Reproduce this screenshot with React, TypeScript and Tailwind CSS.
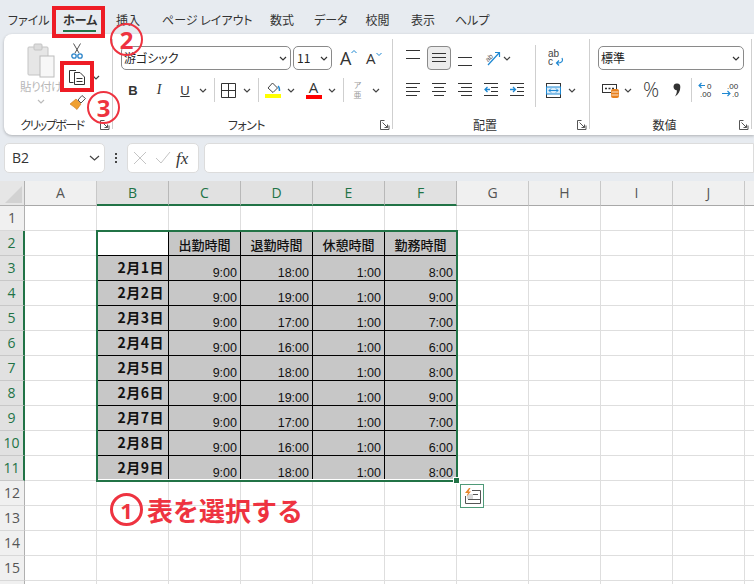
import React from "react";

const jp = { fontFamily: '"Noto Sans CJK JP", "Noto Sans", sans-serif' };

function Svg({ w, h, children }: { w: number; h: number; children: React.ReactNode }) {
  return (
    <svg width={w} height={h} viewBox={`0 0 ${w} ${h}`} fill="none" className="block shrink-0">
      {children}
    </svg>
  );
}

function Chev({ color = "#444" }: { color?: string }) {
  return (
    <div className="w-[10px] flex justify-center shrink-0">
      <Svg w={8} h={5}>
        <path d="M1 1l3 3 3-3" stroke={color} strokeWidth="1.2" />
      </Svg>
    </div>
  );
}

function Launcher() {
  return (
    <div className="w-[10px] mr-[2px] shrink-0">
      <Svg w={10} h={10}>
        <path d="M9 5.5V9.5H0.5V0.5H4.5" stroke="#555" strokeWidth="1" />
        <path d="M2.5 2.5L7.5 7.5M7.5 4.5V7.5H4.5" stroke="#555" strokeWidth="1" />
      </Svg>
    </div>
  );
}

function Lines({ rows }: { rows: number[][] }) {
  return (
    <Svg w={14} h={14}>
      {rows.map(([x1, x2, y], i) => (
        <path key={i} d={`M${x1} ${y}.5H${x2}`} stroke="#333" strokeWidth="1" />
      ))}
    </Svg>
  );
}

function Indent({ inc }: { inc?: boolean }) {
  return (
    <Svg w={14} h={14}>
      <path d="M0 0.5H14M7 4.5H14M7 8.5H14M0 12.5H14" stroke="#333" strokeWidth="1" />
      {inc ? (
        <path d="M0 6.5h5M3 4L5.5 6.5 3 9" stroke="#1e88d2" strokeWidth="1.3" />
      ) : (
        <path d="M6 6.5H1M3.5 4L1 6.5 3.5 9" stroke="#1e88d2" strokeWidth="1.3" />
      )}
    </Svg>
  );
}

function Label({ text, cls }: { text: string; cls?: string }) {
  return (
    <div className="mt-auto mb-[3px] h-[14px] flex items-center">
      <div className={`flex-1 text-center text-[12px] leading-[14px] text-[#333] [font-feature-settings:'palt'] ${cls ?? ""}`}>{text}</div>
      <Launcher />
    </div>
  );
}

function Divider() {
  return <div className="w-px h-[90px] mt-[5px] bg-[#cfcfcf] shrink-0" />;
}

function VLine({ cls }: { cls: string }) {
  return <div className={`w-px h-[24px] bg-[#cfcfcf] shrink-0 ${cls}`} />;
}

function Select({ text, cls, textCls }: { text: string; cls: string; textCls?: string }) {
  return (
    <div className={`h-[24px] border border-[#8a8a8a] rounded-[5px] flex items-center justify-between pl-[2px] pr-[2px] shrink-0 bg-white ${cls}`}>
      <span className={`text-[12px] leading-none text-[#222] [font-feature-settings:'palt'] ${textCls ?? ""}`}>{text}</span>
      <Chev color="#333" />
    </div>
  );
}

function Ribbon() {
  return (
    <div className="ml-[4px] h-[101px] bg-white rounded-l-[8px] shadow-[0_1px_3px_rgba(0,0,0,0.25)] flex">
      {/* clipboard */}
      <div className="w-[108px] shrink-0 flex flex-col pt-[9px]">
        <div className="flex">
          <div className="ml-[14px] w-[46px] flex flex-col items-center">
            <Svg w={28} h={35}>
              <rect x="1" y="4" width="20" height="28" rx="1" fill="#e6e6e6" stroke="#c4c4c4" />
              <rect x="7" y="1" width="8" height="6" rx="1" fill="#dcdcdc" stroke="#c4c4c4" />
              <rect x="13" y="13" width="14" height="21" fill="#f7f7f7" stroke="#bcbcbc" />
            </Svg>
            <div className="mt-[1px] text-[11.5px] leading-[14px] tracking-[-0.5px] text-[#b8b8b8] whitespace-nowrap [font-feature-settings:'palt']">貼り付け</div>
            <div className="mt-[6px]">
              <Chev color="#bbb" />
            </div>
          </div>
          <div className="ml-[3px] flex flex-col">
            <div className="w-[20px] flex justify-center">
              <Svg w={12} h={16}>
                <path d="M2.5 0.5L8 10M9.5 0.5L4 10" stroke="#555" strokeWidth="1" />
                <circle cx="3" cy="13" r="2.2" stroke="#2a83c9" strokeWidth="1.3" />
                <circle cx="9" cy="13" r="2.2" stroke="#2a83c9" strokeWidth="1.3" />
              </Svg>
            </div>
            <div className="mt-[10px] flex items-center">
              <div className="w-[20px] flex justify-center">
                <Svg w={18} h={16}>
                  <path d="M5.5 13.5H1.5V1.5H8" stroke="#333" strokeWidth="1" />
                  <path d="M6.5 3.5H12L16.5 8V15.5H6.5Z" stroke="#333" strokeWidth="1" fill="#fff" />
                  <path d="M8.5 9.5H14.5M8.5 12.5H14.5" stroke="#333" strokeWidth="1" />
                </Svg>
              </div>
              <div className="ml-[4px]">
                <Chev />
              </div>
            </div>
            <div className="mt-[10px] w-[20px] flex justify-center">
              <Svg w={17} h={15}>
                <path d="M1 9L7 4l5 5-4 5.5C6 12.5 3 10.5 1 9z" fill="#f0a030" stroke="#c9751a" strokeWidth="0.6" />
                <path d="M9 5l4-4.5 3.5 3L12 8z" fill="#fff" stroke="#555" strokeWidth="1" />
              </Svg>
            </div>
          </div>
        </div>
        <Label text="クリップボード" cls="tracking-[-1.5px]" />
      </div>
      <Divider />

      {/* font */}
      <div className="w-[279px] shrink-0 flex flex-col pt-[12px]">
        <div className="flex items-center h-[24px]">
          <Select text="游ゴシック" cls="ml-[8px] w-[170px]" />
          <Select text="11" cls="ml-[2px] w-[39px]" textCls="pl-[1px]" />
          <div className="ml-[8px] flex items-start w-[16px]">
            <span className="text-[18px] leading-none text-[#333]" style={{ fontFamily: '"Open Sans", sans-serif' }}>A</span>
            <Svg w={6} h={6}>
              <path d="M0.5 4L3 1.5 5.5 4" stroke="#1e88d2" strokeWidth="1" />
            </Svg>
          </div>
          <div className="ml-[10px] flex items-start w-[16px]">
            <span className="text-[15px] leading-none text-[#333]" style={{ fontFamily: '"Open Sans", sans-serif' }}>A</span>
            <Svg w={6} h={6}>
              <path d="M0.5 2L3 4.5 5.5 2" stroke="#1e88d2" strokeWidth="1" />
            </Svg>
          </div>
        </div>
        <div className="flex items-center h-[24px] mt-[8px]">
          <div className="ml-[7px] w-[26px] text-center text-[13px] font-bold text-[#333] leading-none" style={{ fontFamily: '"Liberation Sans", sans-serif' }}>B</div>
          <div className="w-[26px] text-center text-[14px] italic text-[#333] leading-none" style={{ fontFamily: '"Liberation Serif", serif' }}>I</div>
          <div className="w-[26px] text-center text-[13px] underline text-[#333] leading-none" style={{ fontFamily: '"Liberation Sans", sans-serif' }}>U</div>
          <Chev />
          <VLine cls="ml-[6px]" />
          <div className="w-[26px] flex justify-center">
            <Svg w={15} h={15}>
              <path d="M0.5 0.5H14.5V14.5H0.5ZM7.5 0.5V14.5M0.5 7.5H14.5" stroke="#333" strokeWidth="1" />
            </Svg>
          </div>
          <div className="ml-[1px]">
            <Chev />
          </div>
          <VLine cls="ml-[6px]" />
          <div className="w-[27px] flex justify-center">
            <Svg w={16} h={18}>
              <path d="M3 7L7.5 2l5 5-4.5 4.5z" stroke="#444" strokeWidth="1" fill="#fff" />
              <path d="M13 5c1.5 1 1.5 3 1.5 5" stroke="#1e88d2" strokeWidth="1.5" />
              <rect x="0" y="13" width="16" height="4" fill="#ffff00" />
            </Svg>
          </div>
          <Chev />
          <div className="ml-[4px] w-[27px] flex justify-center">
            <div className="flex flex-col items-center">
              <span className="text-[15px] leading-[13px] text-[#333]" style={{ fontFamily: '"Open Sans", sans-serif' }}>A</span>
              <div className="w-[16px] h-[4px] bg-[#ff0000] mt-[1px]" />
            </div>
          </div>
          <Chev />
          <VLine cls="ml-[6px]" />
          <div className="w-[27px] flex justify-center">
            <div className="flex flex-col items-center text-[#999]">
              <span className="text-[8px] h-[8px] leading-[8px]">ア</span>
              <span className="text-[8px] h-[9px] leading-[9px] mt-[1px]">亜</span>
            </div>
          </div>
          <Chev />
        </div>
        <Label text="フォント" cls="tracking-[-0.5px]" />
      </div>
      <Divider />

      {/* alignment */}
      <div className="w-[196px] shrink-0 flex flex-col pt-[12px]">
        <div className="flex">
          <div className="w-[142px] shrink-0">
            <div className="flex items-center h-[24px]">
              <div className="ml-[13px] -mt-[4px]">
                <Lines rows={[[0, 14, 1], [0, 14, 9]]} />
              </div>
              <div className="ml-[7px] w-[24px] h-[24px] border border-[#8a8a8a] rounded-[4px] bg-[#ececec] flex items-center justify-center">
                <Lines rows={[[0, 14, 2], [0, 14, 6], [0, 14, 10]]} />
              </div>
              <div className="ml-[7px] mt-[4px]">
                <Lines rows={[[0, 14, 4], [0, 14, 12]]} />
              </div>
              <div className="ml-[11px] w-[18px] flex justify-center">
                <Svg w={18} h={16}>
                  <path d="M5 15L16 3M12 2.5h4.5V7" stroke="#1e88d2" strokeWidth="1.2" />
                  <text x="2" y="11" fontSize="7" fill="#555" fontFamily="Liberation Sans" transform="rotate(-45 5 8)">ab</text>
                </Svg>
              </div>
              <div className="ml-[1px]">
                <Chev />
              </div>
            </div>
            <div className="flex items-center h-[24px] mt-[8px]">
              <div className="ml-[13px]">
                <Lines rows={[[0, 14, 0], [0, 11, 4], [0, 14, 8], [0, 11, 12]]} />
              </div>
              <div className="ml-[12px]">
                <Lines rows={[[0, 14, 0], [2, 12, 4], [0, 14, 8], [2, 12, 12]]} />
              </div>
              <div className="ml-[12px]">
                <Lines rows={[[0, 14, 0], [3, 14, 4], [0, 14, 8], [3, 14, 12]]} />
              </div>
              <div className="ml-[12px]">
                <Indent />
              </div>
              <div className="ml-[12px]">
                <Indent inc />
              </div>
            </div>
          </div>
          <div className="w-px h-[62px] -mt-[1px] bg-[#cfcfcf] shrink-0" />
          <div className="flex-1 flex flex-col">
            <div className="h-[24px] ml-[12px] flex items-center">
              <Svg w={16} h={18}>
                <text x="0" y="8" fontSize="10" fill="#444" fontFamily="Liberation Sans">ab</text>
                <text x="0" y="16" fontSize="10" fill="#444" fontFamily="Liberation Sans">c</text>
                <path d="M14 9c1.5 3 0 5-5 5M11 11.5L8.5 14l2.5 2.5" stroke="#1e88d2" strokeWidth="1.2" />
              </Svg>
            </div>
            <div className="h-[24px] mt-[8px] ml-[10px] flex items-center">
              <Svg w={15} h={15}>
                <rect x="0.5" y="0.5" width="14" height="14" fill="#fff" stroke="#333" />
                <rect x="0.5" y="4" width="14" height="7" fill="#d9ecfa" stroke="#1e88d2" />
                <path d="M3 7.5h9M5 5.5l-2 2 2 2M10 5.5l2 2-2 2" stroke="#1e88d2" strokeWidth="1" />
              </Svg>
              <div className="ml-[6px]">
                <Chev />
              </div>
            </div>
          </div>
        </div>
        <Label text="配置" />
      </div>
      <Divider />

      {/* number */}
      <div className="w-[161px] shrink-0 flex flex-col pt-[12px]">
        <Select text="標準" cls="ml-[8px] w-[146px]" />
        <div className="flex items-center h-[24px] mt-[8px]">
          <div className="ml-[12px] w-[17px]">
            <Svg w={17} h={15}>
              <rect x="0.5" y="1.5" width="14" height="8" fill="#fff" stroke="#333" />
              <path d="M3 5.5h2M6.5 5.5h2M10 5.5h2" stroke="#333" strokeWidth="1.4" />
              <rect x="9" y="6" width="8" height="9" rx="2" fill="#e8811f" />
              <path d="M9.5 9h7M9.5 12h7" stroke="#fff" strokeWidth="0.8" />
            </Svg>
          </div>
          <div className="ml-[4px]">
            <Chev />
          </div>
          <div className="ml-[5px] w-[26px] text-center text-[20px] font-light leading-none text-[#333]" style={{ fontFamily: '"Open Sans", sans-serif' }}>%</div>
          <div className="w-[26px] flex justify-center">
            <Svg w={8} h={14}>
              <path d="M0.5 3.7a3.4 3.4 0 1 1 6.8 0.6C7.3 8 5.5 11.5 2 13.5 3.5 11 4 9 3.8 7.2 2 7.2 0.5 5.6 0.5 3.7z" fill="#333" />
            </Svg>
          </div>
          <VLine cls="ml-[1px]" />
          <div className="ml-[6px] w-[16px]">
            <Svg w={18} h={16}>
              <path d="M7 3.5H1M3.5 1L1 3.5 3.5 6" stroke="#1e88d2" strokeWidth="1.1" />
              <text x="9" y="7" fontSize="8" fill="#333" fontFamily="Liberation Sans">0</text>
              <text x="2" y="15" fontSize="8" fill="#333" fontFamily="Liberation Sans">.00</text>
            </Svg>
          </div>
          <div className="ml-[8px] w-[18px]">
            <Svg w={22} h={16}>
              <text x="5" y="7" fontSize="8" fill="#333" fontFamily="Liberation Sans">.00</text>
              <path d="M0 11.5H8M5.5 9l2.5 2.5L5.5 14" stroke="#1e88d2" strokeWidth="1.1" />
              <text x="10" y="15" fontSize="8" fill="#333" fontFamily="Liberation Sans">.0</text>
            </Svg>
          </div>
        </div>
        <Label text="数値" />
      </div>
      <Divider />
    </div>
  );
}

const tabs: [string, string][] = [
  ["ファイル", "ml-[8px] w-[37px]"],
  ["ホーム", "ml-[18px] w-[33px] font-bold"],
  ["挿入", "ml-[19px] w-[26px]"],
  ["ページ レイアウト", "ml-[21px] w-[85px]"],
  ["数式", "ml-[22px] w-[26px]"],
  ["データ", "ml-[19px] w-[32px]"],
  ["校閲", "ml-[19px] w-[25px]"],
  ["表示", "ml-[20px] w-[26px]"],
  ["ヘルプ", "ml-[19px] w-[32px]"],
];

const times: string[][] = [
  ["2月1日", "9:00", "18:00", "1:00", "8:00"],
  ["2月2日", "9:00", "19:00", "1:00", "9:00"],
  ["2月3日", "9:00", "17:00", "1:00", "7:00"],
  ["2月4日", "9:00", "16:00", "1:00", "6:00"],
  ["2月5日", "9:00", "18:00", "1:00", "8:00"],
  ["2月6日", "9:00", "19:00", "1:00", "9:00"],
  ["2月7日", "9:00", "17:00", "1:00", "7:00"],
  ["2月8日", "9:00", "16:00", "1:00", "6:00"],
  ["2月9日", "9:00", "18:00", "1:00", "8:00"],
];

const heads = ["出勤時間", "退勤時間", "休憩時間", "勤務時間"];
const cols = ["A", "B", "C", "D", "E", "F", "G", "H", "I", "J"];
const uiFont = { fontFamily: '"Open Sans", "Noto Sans", sans-serif' };
const cellBlank = "border-r border-b border-[#dedede]";

function RowHead({ n, on }: { n: number; on: boolean }) {
  return (
    <div
      className={`flex items-center justify-center text-[14px] leading-none border-b ${
        on
          ? "bg-[#e1e1e1] text-[#217346] border-r-2 border-r-[#217346] border-b-[#c8c8c8]"
          : "bg-[#f0f0f0] text-[#555] border-r border-r-[#b0b0b0] border-b-[#d8d8d8]"
      }`}
      style={uiFont}
    >
      {n <= 15 ? n : ""}
    </div>
  );
}

function Sheet() {
  const rowsCells: React.ReactNode[] = [];
  for (let r = 1; r <= 16; r++) {
    const on = r >= 2 && r <= 11;
    rowsCells.push(<RowHead key={`h${r}`} n={r} on={on} />);
    for (let c = 0; c < 11; c++) {
      const key = `${r}-${c}`;
      const inTable = on && c >= 1 && c <= 5;
      if (!inTable) {
        rowsCells.push(<div key={key} className={cellBlank} />);
      } else if (r === 2) {
        rowsCells.push(
          c === 1 ? (
            <div key={key} className="bg-white border-r border-b border-black" />
          ) : (
            <div key={key} className="bg-[#c7c7c7] border-r border-b border-black flex items-center justify-center pt-[2px] text-[13px] leading-none font-medium text-[#111]" style={jp}>
              {heads[c - 2]}
            </div>
          )
        );
      } else if (c === 1) {
        rowsCells.push(
          <div key={key} className="bg-[#c7c7c7] border-r border-b border-black flex items-center justify-end pr-[4px] pb-[2px] text-[14px] leading-none font-bold tracking-[0.5px] text-[#111]" style={jp}>
            {times[r - 3][0]}
          </div>
        );
      } else {
        rowsCells.push(
          <div key={key} className="bg-[#c7c7c7] border-r border-b border-black flex items-end justify-end pr-[3px] pb-[1px] text-[12.5px] leading-none text-[#111]" style={{ fontFamily: '"Liberation Sans", sans-serif' }}>
            {times[r - 3][c - 1]}
          </div>
        );
      }
    }
  }
  return (
    <div className="relative mt-[8px] grid grid-cols-[25px_repeat(11,72px)] grid-rows-[25px_repeat(16,25px)] bg-white">
      <div className="bg-[#e6e6e6] border-r border-b border-[#b0b0b0] flex items-end justify-end p-[2px]">
        <Svg w={17} h={17}>
          <path d="M17 0V17H0Z" fill="#d2d2d2" />
        </Svg>
      </div>
      {cols.map((c, i) => {
        const on = i >= 1 && i <= 5;
        return (
          <div
            key={c}
            className={`flex items-center justify-center text-[14px] leading-none border-r ${
              on
                ? "bg-[#e1e1e1] text-[#217346] border-r-[#b8b8b8] border-b-2 border-b-[#217346]"
                : "bg-[#f0f0f0] text-[#555] border-r-[#c8c8c8] border-b border-b-[#a8a8a8]"
            }`}
            style={uiFont}
          >
            {c}
          </div>
        );
      })}
      <div className="bg-[#f0f0f0] border-b border-b-[#a8a8a8]" />
      {rowsCells}

      {/* selection frame */}
      <div className="absolute left-[96px] top-[49px] w-[362px] h-[252px] border-2 border-[#217346] shadow-[inset_0_-1px_0_#fff] pointer-events-none" />
      <div className="absolute left-[453px] top-[296px] w-[5px] h-[5px] bg-[#217346] border border-white box-content" />
      {/* paste options */}
      <div className="absolute left-[460px] top-[303px] w-[24px] h-[24px] bg-white border border-[#4f9a78] flex items-center justify-center">
        <Svg w={17} h={16}>
          <path d="M8 2.5H16.5V15.5H1.5V8" stroke="#555" strokeWidth="1" />
          <path d="M4 11.5H16M9 6.5H14" stroke="#555" strokeWidth="1" />
          <rect x="3" y="6" width="6" height="5" fill="#d8d8d8" />
          <path d="M5 0L1 5h3L2.5 8.5 7 3.5H4.5L6.5 0z" fill="#e8862a" />
        </Svg>
      </div>
    </div>
  );
}

function Circle({ n, cls }: { n: string; cls: string }) {
  return (
    <div className={`absolute w-[33px] h-[33px] rounded-full border-2 border-[#ee3340] flex items-center justify-center text-[24px] leading-none font-bold text-[#ee3340] ${cls}`} style={{ fontFamily: '"Noto Sans", sans-serif' }}>
      {n}
    </div>
  );
}

export default function App() {
  return (
    <div className="relative w-[754px] h-[584px] overflow-hidden bg-[#e7ebf0]" style={jp}>
      {/* tabs */}
      <div className="flex items-start h-[34px] pt-[12px]">
        {tabs.map(([t, c]) => (
          <div key={t} className={`relative shrink-0 whitespace-nowrap text-[12px] leading-[16px] text-[#333] text-center [font-feature-settings:'palt'] ${c}`}>
            {t}
            {t === "ホーム" && <div className="absolute left-0 right-0 top-[18px] h-[2px] bg-[#217346]" />}
          </div>
        ))}
      </div>
      <Ribbon />
      {/* formula bar */}
      <div className="mt-[8px] flex h-[30px]">
        <div className="ml-[4px] w-[101px] bg-white border border-[#dcdcdc] rounded-[5px] flex items-center justify-between pl-[7px] pr-[4px]">
          <span className="text-[14px] leading-none text-[#333]" style={uiFont}>B2</span>
          <Svg w={11} h={6}>
            <path d="M1 1l4.5 4L10 1" stroke="#444" strokeWidth="1.2" />
          </Svg>
        </div>
        <div className="w-[22px] flex flex-col items-center justify-center gap-[2px]">
          <div className="w-[2px] h-[2px] bg-[#444]" />
          <div className="w-[2px] h-[2px] bg-[#444]" />
          <div className="w-[2px] h-[2px] bg-[#444]" />
        </div>
        <div className="w-[72px] bg-white border border-[#dcdcdc] rounded-[5px] flex items-center pl-[5px]">
          <Svg w={14} h={14}>
            <path d="M1 1l12 12M13 1L1 13" stroke="#c4c4c4" strokeWidth="1" />
          </Svg>
          <div className="ml-[8px]">
            <Svg w={16} h={14}>
              <path d="M1 7l5 5L15 1" stroke="#c4c4c4" strokeWidth="1" />
            </Svg>
          </div>
          <span className="ml-[5px] text-[17px] leading-none italic text-[#333]" style={{ fontFamily: '"Liberation Serif", serif' }}>fx</span>
        </div>
        <div className="ml-[5px] flex-1 bg-white border border-[#dcdcdc] rounded-l-[5px]" />
      </div>
      <Sheet />

      {/* annotations */}
      <div className="absolute left-[52px] top-[6px] w-[53px] h-[32px] border-[4px] border-[#ee1c25]" />
      <div className="absolute left-[60px] top-[61px] w-[34px] h-[31px] border-[4px] border-[#ee1c25]" />
      <Circle n="2" cls="left-[110px] top-[23px]" />
      <Circle n="3" cls="left-[87px] top-[91px]" />
      <div className="absolute left-[110px] top-[493px] flex items-center text-[#ee3340] font-bold">
        <div className="w-[33px] h-[33px] rounded-full border-[3px] border-[#ee3340] flex items-center justify-center text-[22px] leading-none" style={{ fontFamily: '"Noto Sans", sans-serif' }}>1</div>
        <span className="ml-[4px] text-[26px] leading-[33px] whitespace-nowrap">表を選択する</span>
      </div>
    </div>
  );
}
